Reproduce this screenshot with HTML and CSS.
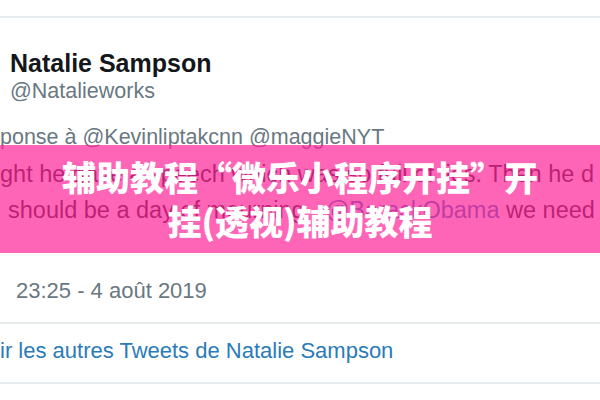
FILE: index.html
```html
<!DOCTYPE html>
<html lang="fr">
<head>
    <meta charset="UTF-8">
    <meta name="viewport" content="width=device-width, initial-scale=1.0">
    <title>Natalie Sampson</title>
    <link rel="stylesheet" href="styles.css">
</head>
<body>
    <div class="top-rule"></div>

    <div class="tweet">
        <div class="author">
            <div class="name">Natalie Sampson</div>
            <div class="handle">@Natalieworks</div>
        </div>

        <div class="reply">ponse à @Kevinliptakcnn @maggieNYT</div>

        <div class="text">
            <div>ght he gave a speech which was so full of lies. Then he d</div>
            <div class="indent">should be a day of mourning - <span class="link">@BarackObama</span> we need</div>
        </div>

        <div class="time">23:25 - 4 août 2019</div>
        <div class="more">ir les autres Tweets de Natalie Sampson</div>
    </div>

    <div class="banner">
        <h1>辅助教程“微乐小程序开挂”开<br>挂(透视)辅助教程</h1>
    </div>
</body>
</html>
```

FILE: styles.css
```css
/* Page */
body {
    margin: 0;
    height: 400px;
    overflow: hidden;
    position: relative;
    background: #fff;
    font-family: 'Liberation Sans', Arial, sans-serif;
    color: #1c2022;
}

.top-rule {
    height: 16px;
    border-bottom: 2px solid #e6e9ee;
}

/* Tweet card */
.tweet {
    overflow: hidden;
}

.author {
    padding: 30px 0 0 10px;
}

.name {
    font-size: 25px;
    line-height: 30px;
    font-weight: bold;
    color: #14171a;
}

.handle {
    font-size: 21.5px;
    line-height: 26px;
    color: #697882;
}

.reply {
    margin-top: 20px;
    font-size: 21.5px;
    line-height: 26px;
    color: #697882;
    white-space: nowrap;
    overflow: hidden;
}

.text {
    margin-top: 6px;
    font-size: 23.5px;
    line-height: 36px;
    white-space: nowrap;
    overflow: hidden;
}

.text .indent {
    padding-left: 8px;
}

.link {
    color: #2b7bb9;
}

.time {
    margin-top: 50px;
    padding: 0 0 18px 16px;
    font-size: 22px;
    line-height: 26px;
    color: #697882;
    border-bottom: 2px solid #e6e9ee;
}

.more {
    padding: 14px 0 18px;
    font-size: 22px;
    line-height: 26px;
    color: #2b7bb9;
    border-bottom: 2px solid #e6e9ee;
    white-space: nowrap;
    overflow: hidden;
}

/* Pink title banner over the tweet */
.banner {
    position: absolute;
    top: 145px;
    left: 0;
    right: 0;
    height: 108px;
    display: flex;
    align-items: center;
    justify-content: center;
    background: rgba(255, 36, 152, 0.7);
}

.banner h1 {
    margin: 0;
    font-family: 'Noto Sans CJK SC', sans-serif;
    font-size: 34px;
    line-height: 44px;
    font-weight: 900;
    color: #fff;
    text-align: center;
}
```
